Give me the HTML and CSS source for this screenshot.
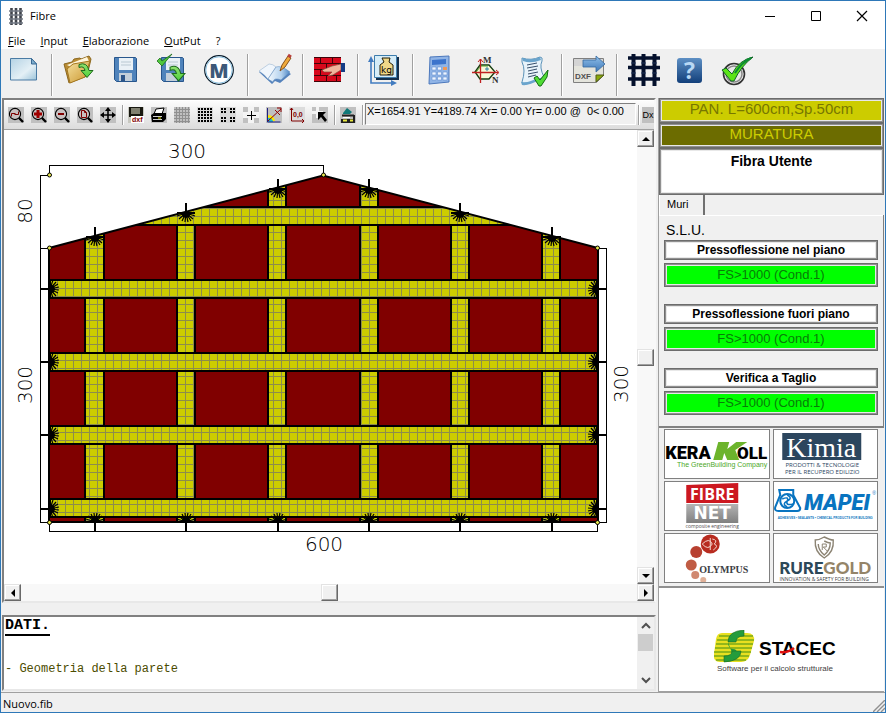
FILE: index.html
```html
<!DOCTYPE html>
<html lang="it">
<head>
<meta charset="utf-8">
<title>Fibre</title>
<link rel="stylesheet" href="styles.css">
</head>
<body>
<svg class="defs" aria-hidden="true">
  <defs>
    <linearGradient id="paper" x1="0" y1="0" x2="1" y2="1"><stop offset="0" stop-color="#b4d2e4"/><stop offset=".6" stop-color="#e4f0f6"/><stop offset="1" stop-color="#9cc4da"/></linearGradient>
    <linearGradient id="gold" x1="0" y1="0" x2="1" y2="1"><stop offset="0" stop-color="#f6e2a0"/><stop offset="1" stop-color="#c9942c"/></linearGradient>
    <linearGradient id="green" x1="0" y1="0" x2="0" y2="1"><stop offset="0" stop-color="#8fe070"/><stop offset="1" stop-color="#4fd23c"/></linearGradient>
    <linearGradient id="blue" x1="0" y1="0" x2="0" y2="1"><stop offset="0" stop-color="#8fc0ea"/><stop offset="1" stop-color="#3f78b8"/></linearGradient>
    <linearGradient id="navy" x1="0" y1="0" x2="0" y2="1"><stop offset="0" stop-color="#5d8fc4"/><stop offset="1" stop-color="#123f7a"/></linearGradient>
    <linearGradient id="steel" x1="0" y1="0" x2="1" y2="0"><stop offset="0" stop-color="#f4f9fd"/><stop offset=".6" stop-color="#b4d2ee"/><stop offset="1" stop-color="#4d86c4"/></linearGradient>
    <linearGradient id="silver" x1="0" y1="0" x2="0" y2="1"><stop offset="0" stop-color="#b4b4b4"/><stop offset="1" stop-color="#808080"/></linearGradient>
    <symbol id="arrow-down" viewBox="0 0 16 16"><path d="M1 2q8-3 10 6h4l-6 7-6-7h4q-1-5-6-3z" fill="url(#green)" stroke="#1d6b1c"/></symbol>
    <symbol id="lens" viewBox="0 0 16 16"><path d="M0 0h16v16H0z" fill="#c0c0c0"/><path d="M10 10l5 5" stroke="#000" stroke-width="2.4"/><circle cx="7" cy="7" r="5.6" fill="#c8c0c0" stroke="#000" stroke-width="1.1"/></symbol>
    <pattern id="mesh" width="8" height="8" patternUnits="userSpaceOnUse"><path d="M0 0h8v8H0z" fill="#cccc00"/><path d="M1 0h1v8H1zM0 0h8v1H0z" fill="#8c8c4c"/></pattern>
    <g id="fan">
      <path d="M-9-1H9V1H-9z"/><path d="M-1-10H1V1H-1z"/><path d="M-5 0H5L3 4 0 5-3 4z"/>
      <path d="M0 0L-9 3M0 0L-7 6M0 0L-4 8M0 0L-1 9M0 0L2 9M0 0L5 8M0 0L7 6M0 0L9 3" stroke="#000" stroke-width="1.2"/>
    </g>
    <clipPath id="wall"><path d="M49 248L323 175.500 598 248V522H49z"/></clipPath>
  </defs>
</svg>

<header class="titlebar">
  <svg class="app-icon" viewBox="0 0 14 17"><path d="M2.500 0v17M7 0v17M11.500 0v17" stroke="#40444c" stroke-width="2.600"/><path d="M0 3h14M0 7h14M0 11h14M0 15h14" stroke="#737985" stroke-width="1.600"/></svg>
  <h1>Fibre</h1>
  <div class="window-buttons">
    <button aria-label="Riduci"><svg viewBox="0 0 12 12"><path d="M1 6.500h10" stroke="#000"/></svg></button>
    <button aria-label="Ingrandisci"><svg viewBox="0 0 12 12"><path d="M1.500 1.500h9v9h-9z" fill="none" stroke="#000"/></svg></button>
    <button aria-label="Chiudi"><svg viewBox="0 0 12 12"><path d="M1 1l10 10M11 1L1 11" stroke="#000" stroke-width="1.200"/></svg></button>
  </div>
</header>

<nav class="menu">
  <a href="#"><u>F</u>ile</a><a href="#"><u>I</u>nput</a><a href="#"><u>E</u>laborazione</a><a href="#"><u>O</u>utPut</a><a href="#">?</a>
</nav>

<div class="toolbar">
  <button aria-label="Nuovo"><svg viewBox="0 0 32 32"><path d="M2.500 4.500h21l5 5.500v16h-26z" fill="url(#paper)" stroke="#4a7ba4"/><path d="M23.500 4.500V10h5z" fill="#7fb0d0" stroke="#3a6a94"/></svg></button>
  <i></i>
  <button aria-label="Apri"><svg viewBox="0 0 32 32"><path d="M1 10l8-2 2-3 6-1 1 1 8-3 2 3-4 17-18 7z" fill="#b98c34" stroke="#8c6820"/><path d="M4 11l20-8 2 4-18 6z" fill="#fff6dc"/><path d="M7 29L4 15l6-5 17-3-5 16z" fill="url(#gold)" stroke="#a57820"/><use href="#arrow-down" x="15" y="8" width="16" height="17"/></svg></button>
  <button aria-label="Salva"><svg viewBox="0 0 32 32"><path d="M4.500 3.500h21l1 1v23h-20l-2-2z" fill="#4f83bb" stroke="#28568c"/><path d="M9 4h14v12H9z" fill="#eaf1f6"/><path d="M11 8h10M11 11h10" stroke="#b9c8d2"/><path d="M9 19h13v8H9z" fill="#c3cfda"/><path d="M11 21h4v6h-4z" fill="#2c5589"/></svg></button>
  <button aria-label="Salva con nome"><svg viewBox="0 0 32 32"><path d="M4.500 3.500h21l1 1v23h-20l-2-2z" fill="#4f83bb" stroke="#28568c"/><path d="M9 4h14v12H9z" fill="#eaf1f6"/><path d="M11 8h10M11 11h10" stroke="#b9c8d2"/><path d="M9 19h11v8H9z" fill="#c3cfda"/><path d="M0 7l5 5L15 0 5 7 3 4z" fill="#50c83c" stroke="#1d6b1c" stroke-width=".8"/><use href="#arrow-down" x="12" y="11" width="17" height="17"/></svg></button>
  <button aria-label="Materiali"><svg viewBox="0 0 32 32"><circle cx="15" cy="16" r="14.300" fill="#fff" stroke="#081c2c" stroke-width="1.200"/><circle cx="15" cy="16" r="13.200" fill="none" stroke="#8ec4e4"/><text x="15" y="23.500" class="ic-m">M</text></svg></button>
  <i></i>
  <button aria-label="Relazione"><svg viewBox="0 0 32 32"><path d="M0 18l10-7 5 3 6-1 11 7-11 9-5-2-3 3z" fill="#5482bc"/><path d="M0 17l10-7q4 0 7 3L9 25q-4-5-9-8z" fill="#f0f6fc" stroke="#8aaacb" stroke-width=".5"/><path d="M9 25l8-12q5-2 14 5l-9 8q-7-3-8 2z" fill="url(#steel)" stroke="#5d8abc" stroke-width=".5"/><path d="M21 17l2-6 6-9 3 2-6 9z" fill="#efaa3c" stroke="#86501a"/><path d="M29 1l3 2" stroke="#b8403c" stroke-width="3"/></svg></button>
  <i></i>
  <button aria-label="Muratura"><svg viewBox="0 0 32 32"><path d="M0 3h27v25H0z" fill="#d8081c"/><path d="M0 3.500h27M0 9.500h27M0 15.500h27M0 21.500h27M0 27.500h27M6.500 3v6M18.500 3v6M12.500 9v6M24.500 9v6M6.500 15v6M12.500 21v6M22.500 21v6" stroke="#3c0408" fill="none"/><path d="M8 16l10-4 9-2v6l-5 3-3 2-5 1 4-4-8 0z" fill="#f0b49c" stroke="#8c4c3c" stroke-width=".7"/><path d="M27 9h4v9h-4z" fill="#143c86"/></svg></button>
  <i></i>
  <button aria-label="Carichi"><svg viewBox="0 0 32 32"><path d="M7 3h23v23H7z" fill="#14304c"/><path d="M5.500 1.500h22v22h-22z" fill="#d6edf8" stroke="#3d7cac"/><path d="M13 4h8l-1 4 4 3v10H11V11l4-3z" fill="#f0d888" stroke="#241c04"/><text x="17.500" y="19" class="ic-kg">kg</text><path d="M2 4v25h24" fill="none" stroke="#427cc0" stroke-width="1.600"/><path d="M2 2L-1 8h6zM28 29l-6-3v6z" fill="#427cc0"/></svg></button>
  <i></i>
  <button aria-label="Calcolo"><svg viewBox="0 0 32 32"><path d="M6 3l19-1v26L5 30z" fill="#90b4e6" stroke="#4c78bc"/><path d="M8 6l14-1v5L8 11z" fill="#3c74cc"/><g fill="#eef5ff" stroke="#6690d0" stroke-width=".6"><path d="M8 13h4v3H8zM13.500 13h4v3h-4zM8 18h4v3H8zM13.500 18h4v3h-4zM19 18h4v3h-4zM8 23h4v3H8zM13.500 23h4v3h-4zM19 23h4v3h-4z"/></g><path d="M19 13h4v3h-4z" fill="#ef9858"/></svg></button>
  <button aria-label="Dominio M-N"><svg viewBox="0 0 32 32"><path d="M4 18l5-7h9l6 7-6 7H9z" fill="#fafad8" stroke="#143c10" stroke-width="1.300"/><path d="M5 18l5-6h7" stroke="#50a030" fill="none"/><path d="M1 18.500h26M9.500 5v24" stroke="#c02020" stroke-width="1.300"/><path d="M7 8l2.500-3L12 8M25 16l3 2.500-3 2.500" stroke="#c02020" fill="none"/><path d="M16 13v4M14 15h4" stroke="#3080a0"/><text x="12" y="9" class="ic-mn">M</text><text x="21" y="29" class="ic-mn">N</text></svg></button>
  <button aria-label="Verifiche"><svg viewBox="0 0 32 32"><path d="M4 4q9 3 18-1 3 0 2 4-3 6 2 16l-14 6q-8 2-8-1 4-12 0-20z" fill="#e8f3fa" stroke="#5b92b8"/><path d="M4 4q10 3 18-1l1 3q-10 4-18 1z" fill="#6aa4cc"/><path d="M3 28q9 1 16-4l2 2q-10 6-17 5z" fill="#6aa4cc"/><path d="M9 11l10-2M9 14l11-2M10 17l9-2M10 20l10-2M10 23l8-2" stroke="#38506c"/><path d="M16 24l3-2 3 4 8-10-1 7-6 9-2 0z" fill="#50dc34" stroke="#126c14"/></svg></button>
  <i></i>
  <button aria-label="Esporta DXF"><svg viewBox="0 0 32 32"><path d="M.500 4.500h30v17l-7 7h-23z" fill="#d4d4d4" stroke="#808080"/><path d="M1 12h29v9l-7 7H1z" fill="#e4e4dc"/><path d="M23 28v-7h8z" fill="#88a80c" stroke="#505c14"/><text x="2" y="25" class="ic-dxf">DXF</text><path d="M10 6h13V2l9 8-9 8v-5H10z" fill="url(#blue)" stroke="#34689e" stroke-width=".8"/></svg></button>
  <i></i>
  <button aria-label="Rete"><svg viewBox="0 0 32 32"><path d="M5.500 0v32M15.500 0v32M26.500 0v32" stroke="#04102c" stroke-width="4"/><path d="M0 4h32M0 13.500h32M0 25h32" stroke="#04102c" stroke-width="3.600"/><path d="M3 9h5M13 9h5M24 9h5M3 19h5M13 19h5M24 19h5" stroke="#203458"/></svg></button>
  <button aria-label="Aiuto"><svg viewBox="0 0 32 32"><rect x="2" y="4" width="25" height="25" rx="3" fill="url(#navy)"/><text x="14.500" y="25" class="ic-help">?</text></svg></button>
  <button aria-label="Conferma"><svg viewBox="0 0 32 32"><circle cx="12" cy="20" r="10.500" fill="#e8e8e8" stroke="#303030" stroke-width="1.600"/><circle cx="12" cy="20" r="8" fill="none" stroke="#888" stroke-width="1.500"/><path d="M0 16l4-2 6 6Q17 6 31 3 19 12 12 27H9z" fill="#5ce418" stroke="#106428"/><path d="M13 19Q20 8 29 4" stroke="#0c8c34" stroke-width="2" fill="none"/></svg></button>
</div>

<main class="main">
  <section class="work">
    <div class="view">
      <div class="subbar">
        <button aria-label="Zoom finestra"><svg viewBox="0 0 16 16"><use href="#lens"/><path d="M3.500 9.500v-3h4M10.500 4.500v3h-4" fill="none" stroke="#800000"/></svg></button>
        <button aria-label="Zoom avanti"><svg viewBox="0 0 16 16"><use href="#lens"/><path d="M7 3v8M3 7h8" stroke="#a00000" stroke-width="3"/></svg></button>
        <button aria-label="Zoom indietro"><svg viewBox="0 0 16 16"><use href="#lens"/><path d="M4 7h6" stroke="#800000" stroke-width="2"/></svg></button>
        <button aria-label="Zoom tutto"><svg viewBox="0 0 16 16"><use href="#lens"/><path d="M4.500 3.500h3l2 2v5h-5zM7.500 3.500v2h2" fill="none" stroke="#800000"/></svg></button>
        <button aria-label="Sposta"><svg viewBox="0 0 16 16"><path d="M0 0h16v16H0z" fill="#c0c0c0"/><path d="M8 2v12M2 8h12" stroke="#000" stroke-width="1.600"/><path d="M8 0l3 4H5zM8 16l3-4H5zM0 8l4-3v6zM16 8l-4-3v6z"/></svg></button>
        <i></i>
        <button aria-label="Salva DXF"><svg viewBox="0 0 16 16"><path d="M0 0h16v16H0z" fill="#c8c8c0"/><path d="M1 0h14v10H1z" fill="#181810"/><path d="M3 1h9v6H3z" fill="#808070"/><path d="M3 9h13v7H3z" fill="#fff"/><text x="4" y="15" class="ic-tiny">dxf</text></svg></button>
        <button aria-label="Stampa"><svg viewBox="0 0 16 16"><path d="M0 0h16v16H0z" fill="#c0c0c0"/><path d="M5 2l8-1-2 6H3z" fill="#fff" stroke="#000"/><path d="M0 8l3-2h12v6l-3 3H1z"/><path d="M2 9.500h9M2 12.500h9" stroke="#d0d0d0"/><path d="M7 11h3" stroke="#e0e000"/></svg></button>
        <button aria-label="Griglia fine"><svg viewBox="0 0 16 16"><path d="M0 0h16v16H0z" fill="#c0c0c0"/><path d="M2.500 0v16M5.500 0v16M8.500 0v16M11.500 0v16M14.500 0v16M0 2.500h16M0 5.500h16M0 8.500h16M0 11.500h16M0 14.500h16" stroke="#909090"/></svg></button>
        <button aria-label="Griglia"><svg viewBox="0 0 16 16"><path d="M0 0h16v16H0z" fill="#d8d8d8"/><path d="M1 2h15M1 5h15M1 8h15M1 11h15M1 14h15" stroke="#000" stroke-width="2" stroke-dasharray="2 1"/></svg></button>
        <button aria-label="Aggancio griglia"><svg viewBox="0 0 16 16"><path d="M0 0h16v16H0z" fill="#d8d8d8"/><path d="M1 2h5M1 5h5M10 2h5M10 5h5M1 11h5M1 14h5M10 11h5M10 14h5" stroke="#000" stroke-width="2" stroke-dasharray="2 1"/></svg></button>
        <button aria-label="Aggancio punto"><svg viewBox="0 0 16 16"><path d="M0 0h16v16H0z" fill="#c0c0c0"/><path d="M5 0h6v5h5v6h-5v5H5v-5H0V5h5z" fill="#f4f4f4"/><path d="M8.500 4v9M4 8.500h9" stroke="#000"/></svg></button>
        <button aria-label="Angolo"><svg viewBox="0 0 16 16"><path d="M0 0h16v16H0z" fill="#c0c0c0"/><path d="M2 8q6 0 7 6H2z" fill="#ffe800"/><path d="M2 11a4 4 0 0 1 5 4H2z" fill="#20b8d0"/><path d="M1.500 1v14h13" stroke="#202080" fill="none"/><path d="M2 14L15 2M11 1h4v4M9 3l5 5" stroke="#900000" fill="none"/></svg></button>
        <button aria-label="Origine"><svg viewBox="0 0 16 16"><path d="M0 0h16v16H0z" fill="#dcdcdc"/><path d="M2.500 1v13H15M1 3l1.500-2L4 3M13 12l2 2-2 2" stroke="#800000" fill="none"/><text x="4" y="10" class="ic-tiny">0,0</text></svg></button>
        <button aria-label="Seleziona"><svg viewBox="0 0 16 16"><path d="M0 0h16v16H0z" fill="#c0c0c0"/><path d="M4 0h3v4h4v3H7v4H4V7H0V4h4z" fill="#f4f4f4"/><path d="M6 5h8l-3 3 4 5-2 2-4-5-3 3z"/></svg></button>
        <i></i>
        <button aria-label="Rendering"><svg viewBox="0 0 16 16"><path d="M0 0h16v16H0z" fill="#c0c0c0"/><path d="M3 6l4-5 5 4-2 2H3z" fill="#107878"/><path d="M2 7.500h12v2H2zM1 12h14v4H1zM13 8h2v6h-2z" fill="#202020"/><path d="M3 10.500h7" stroke="#fff"/><path d="M3 13.500h4M10 13.500h3" stroke="#e8e840" stroke-width="2"/></svg></button>
        <i></i>
        <input class="readout" type="text" readonly aria-label="Coordinate" value="X=1654.91 Y=4189.74 Xr= 0.00 Yr= 0.00 @  0&lt; 0.00">
        <i></i>
        <button class="dx">Dx</button>
      </div>
      <div class="stage">
        <div class="canvas">
          <svg class="drawing" width="633" height="454" viewBox="4 130 633 454">
            <g clip-path="url(#wall)">
              <path d="M49 170h549v352H49z" fill="#800000"/>
              <g fill="url(#mesh)" stroke="#000" stroke-width="2">
                <path d="M85 170h19v360H85zM177 170h18v360h-18zM268 170h18v360h-18zM360 170h18v360h-18zM451 170h18v360h-18zM542 170h18v360h-18z"/>
                <path d="M40 207h570v18H40zM40 280h570v18H40zM40 353h570v18H40zM40 426h570v18H40zM40 499h570v18H40z"/>
              </g>
            </g>
            <path d="M49 248L323 175.500 598 248V522H49z" fill="none" stroke="#000" stroke-width="2"/>
            <g stroke="#000" fill="none" shape-rendering="crispEdges">
              <path d="M49.500 175V165.500H323.500V175M49 175.500H40.500V522.500H49M41 248.500h8M598 248.500h8.500V522.500H598M49.500 522v9.500H597.500V522"/>
            </g>
            <use href="#fan" x="95" y="237"/><use href="#fan" x="186" y="213"/><use href="#fan" x="278" y="189"/><use href="#fan" x="369" y="189"/><use href="#fan" x="460" y="213"/><use href="#fan" x="552" y="237"/>
            <g transform="translate(0 522) scale(1 -1)"><use href="#fan" x="95"/><use href="#fan" x="186"/><use href="#fan" x="278"/><use href="#fan" x="369"/><use href="#fan" x="460"/><use href="#fan" x="552"/></g>
            <g transform="translate(50 0) rotate(-90)"><use href="#fan" x="-289"/><use href="#fan" x="-362"/><use href="#fan" x="-435"/><use href="#fan" x="-509"/></g>
            <g transform="translate(597 0) rotate(90)"><use href="#fan" x="289"/><use href="#fan" x="362"/><use href="#fan" x="435"/><use href="#fan" x="509"/></g>
            <g fill="#e8e850" stroke="#000"><circle cx="49.500" cy="175" r="2"/><circle cx="323.500" cy="175" r="2"/><circle cx="49.500" cy="248" r="2"/><circle cx="597.500" cy="248" r="2"/><circle cx="49.500" cy="522.500" r="2"/><circle cx="597.500" cy="522.500" r="2"/></g>
            <g class="dims">
              <text x="187" y="158">300</text><text x="324" y="551">600</text>
              <text transform="translate(32 211) rotate(-90)">80</text>
              <text transform="translate(32 385) rotate(-90)">300</text>
              <text transform="translate(628 384) rotate(-90)">300</text>
            </g>
          </svg>
        </div>
        <div class="scroll vertical">
          <button aria-label="Su"><svg viewBox="0 0 8 8"><path d="M0 6l4-4 4 4z"/></svg></button>
          <span class="track"></span><span class="thumb"></span><span class="track"></span>
          <button aria-label="Giù"><svg viewBox="0 0 8 8"><path d="M0 2l4 4 4-4z"/></svg></button>
        </div>
      </div>
      <div class="scroll horizontal">
        <button aria-label="Sinistra"><svg viewBox="0 0 8 8"><path d="M6 0L2 4l4 4z"/></svg></button>
        <span class="track"></span><span class="thumb"></span><span class="track"></span>
        <button aria-label="Destra"><svg viewBox="0 0 8 8"><path d="M2 0l4 4-4 4z"/></svg></button>
      </div>
    </div>
    <div class="report">
      <div class="report-text">
        <h2>DATI.</h2>
        <p>- Geometria della parete</p>
      </div>
      <div class="flat-scroll">
        <svg viewBox="0 0 10 8"><path d="M1 6l4-4 4 4" fill="none" stroke="#505050" stroke-width="2"/></svg>
        <span class="flat-thumb"></span>
        <svg viewBox="0 0 10 8"><path d="M1 2l4 4 4-4" fill="none" stroke="#505050" stroke-width="2"/></svg>
      </div>
    </div>
  </section>

  <aside class="side">
    <button class="field panel-name">PAN. L=600cm,Sp.50cm</button>
    <button class="field material">MURATURA</button>
    <div class="field fiber">Fibra Utente</div>
    <div class="tabs"><button class="tab">Muri</button></div>
    <div class="page">
      <h3>S.L.U.</h3>
      <div class="check"><button class="field name">Pressoflessione nel piano</button><div class="field ok">FS&gt;1000 (Cond.1)</div></div>
      <div class="check"><button class="field name">Pressoflessione fuori piano</button><div class="field ok">FS&gt;1000 (Cond.1)</div></div>
      <div class="check"><button class="field name">Verifica a Taglio</button><div class="field ok">FS&gt;1000 (Cond.1)</div></div>
    </div>
    <div class="brands">
      <a href="#"><svg viewBox="0 0 103 48"><text x="0" y="29" class="kera">KERA</text><text x="102" y="29" class="kera end">OLL</text><path d="M53 12h11l-2 7 9-7h11L70 20l4 10H62l-3-7-2 7H48z" fill="#6cb42c"/><text x="102" y="37" class="kera-sub">The GreenBuilding Company</text></svg></a>
      <a href="#"><svg viewBox="0 0 103 48"><path d="M8 3h79v27H8z" fill="#2c465e"/><text x="47" y="27" class="kimia">Kimia</text><text x="48" y="37" class="kimia-sub">PRODOTTI &amp; TECNOLOGIE</text><text x="48" y="44" class="kimia-sub">PER IL RECUPERO EDILIZIO</text></svg></a>
      <a href="#"><svg viewBox="0 0 103 48"><path d="M21 3l52-2v20H21z" fill="#cc1820"/><path d="M21 22h52v19H21z" fill="url(#silver)"/><text x="47" y="18" class="fibre">FIBRE</text><text x="47" y="37" class="net">NET</text><text x="47" y="46" class="fibre-sub">composite engineering</text></svg></a>
      <a href="#"><svg viewBox="0 0 103 48"><path d="M5 8h14v5l7 13q0 3-3 3H4q-4 0-3-4l5-12z" fill="#fff" stroke="#0874c0" stroke-width="2"/><circle cx="13" cy="19" r="7" fill="none" stroke="#0874c0" stroke-width="2"/><path d="M13 13q6 3 0 6t0 6M8 17q7-3 5 2t6 3" stroke="#0874c0" stroke-width="1.500" fill="none"/><text x="30" y="28" class="mapei">MAPEI</text><text x="98" y="13" class="reg">®</text><text x="51" y="37" class="mapei-sub">ADHESIVES • SEALANTS • CHEMICAL PRODUCTS FOR BUILDING</text></svg></a>
      <a href="#"><svg viewBox="0 0 103 48"><circle cx="45" cy="10" r="9.500" fill="#b82c20"/><path d="M37 10q7-7 10 0-4 7-10 0M45 4v12M47 5q6 1 2 5 5 2-1 6" fill="none" stroke="#f4d8d0"/><circle cx="31" cy="18" r="6" fill="#b84030"/><circle cx="26" cy="31" r="5.500" fill="#c05c44"/><circle cx="30" cy="41" r="4" fill="#d08870"/><circle cx="38" cy="46" r="3" fill="#e0b098"/><text x="34" y="39" class="olympus">OLYMPUS</text></svg></a>
      <a href="#"><svg viewBox="0 0 103 48"><path d="M50 3q6 3 9 3 1 12-9 18-10-6-9-18 4 0 9-3zM50 7q4 2 6 2 0 7-6 12-6-5-6-11" fill="none" stroke="#8c8474" stroke-width="1.400"/><path d="M48 16v-6h4v3h-3l4 4" fill="none" stroke="#8c8474"/><text x="51" y="40" class="rure">RURE<tspan class="gold">GOLD</tspan></text><text x="50" y="47" class="rure-sub">INNOVATION &amp; SAFETY FOR BUILDING</text></svg></a>
    </div>
    <div class="vendor">
      <svg width="126" height="44" viewBox="0 0 126 44">
        <path d="M9 3h25q8 0 7 8l-4 14q-2 7-9 7H7q-7 0-6-8L3 9q1-6 6-6z" fill="#e8e020"/>
        <path d="M6 6h34M4 10h37M3 14h37M2 18h37M1 22h37M1 26h35M3 30h30" stroke="#78a818" stroke-width="1.400"/>
        <path d="M31 0v6q-8 0-8 6h-8Q15 1 31 0z" fill="#249c3c" stroke="#1c6c24" stroke-width=".6"/>
        <path d="M15 12q0 7 5 7 4 0 4 4 0 9-13 9v-6q8 0 8-3" fill="#249c3c"/>
        <path d="M11 32v-6q8 0 8-5h9q0 10-17 11z" fill="#249c3c" stroke="#1c6c24" stroke-width=".6"/>
        <text x="46" y="25" class="stacec">STACEC</text><path d="M67 22q8 1 14-4" stroke="#e01010" stroke-width="2.500" fill="none"/>
        <text x="62" y="41" class="stacec-sub">Software per il calcolo strutturale</text>
      </svg>
    </div>
  </aside>
</main>

<footer class="status"><span>Nuovo.fib</span>
  <svg viewBox="0 0 12 12"><path d="M0 12L12 0M4 12l8-8M8 12l4-4" stroke="#909090" stroke-width="1.400"/></svg>
</footer>
</body>
</html>
```
FILE: styles.css
```css
* { box-sizing: border-box; }

body {
  margin: 0;
  min-height: 100vh;
  display: flex;
  flex-direction: column;
  border: 1px solid #2e78b8;
  background: #f0f0f0;
  color: #000;
  font: 11px/16px "Open Sans", "Liberation Sans", sans-serif;
}

button {
  padding: 0;
  border: 0;
  background: none;
  color: inherit;
  font: inherit;
}

a { color: inherit; text-decoration: none; }
h1, h2, h3, p { margin: 0; font: inherit; }
svg { display: block; }
.defs { position: absolute; width: 0; height: 0; }

/* Title and menu */
.titlebar {
  display: flex;
  align-items: center;
  height: 30px;
  padding-left: 8px;
  background: #fff;
}
.app-icon { width: 14px; height: 17px; margin-right: 7px; }
.window-buttons { display: flex; margin-left: auto; }
.window-buttons button { display: grid; place-items: center; width: 46px; height: 30px; }
.window-buttons svg { width: 12px; height: 12px; }

.menu { display: flex; gap: 15px; height: 18px; padding: 2px 7px 0; background: #fff; }

/* Main toolbar */
.toolbar { display: flex; height: 48px; padding-top: 5px; }
.toolbar button { width: 47px; height: 32px; padding-left: 7px; }
.toolbar svg { width: 32px; height: 32px; overflow: visible; }
.toolbar i {
  width: 2px;
  height: 42px;
  margin: 0 3px;
  border-left: 1px solid #a0a0a0;
  border-right: 1px solid #fff;
}
.ic-m { font: 900 20px "Open Sans", sans-serif; fill: #3c5878; text-anchor: middle; }
.ic-kg { font: 9px "DejaVu Sans", sans-serif; text-anchor: middle; }
.ic-mn { font: bold 9px "Liberation Serif", serif; fill: #303030; }
.ic-dxf { font: bold 8px "Liberation Sans", sans-serif; fill: #505050; }
.ic-help { font: bold 23px "Open Sans", sans-serif; fill: #b8d8f4; text-anchor: middle; }
.ic-tiny { font: bold 7px "Liberation Sans", sans-serif; fill: #800000; }

/* Two-column body */
.main { flex: 1; display: flex; padding-top: 1px; }
.work { flex: 1; min-width: 0; display: flex; flex-direction: column; gap: 12px; padding: 0 2px 1px 1px; }
.view {
  flex: 1;
  display: flex;
  flex-direction: column;
  border: 2px solid;
  border-color: #808080 #f8f8f8 #e8e8e8 #808080;
}

.subbar {
  display: flex;
  height: 30px;
  padding: 6px 0 0 1px;
  overflow: hidden;
  border-top: 1px solid #fff;
  border-bottom: 1px solid #a0a0a0;
  background: linear-gradient(#fcfcfc, #dcdcdc);
}
.subbar button { flex: none; width: 23px; height: 16px; padding-left: 3px; }
.subbar svg { width: 16px; height: 16px; }
.subbar i {
  flex: none;
  width: 2px;
  height: 20px;
  margin: -2px 1px 0 2px;
  border-left: 1px solid #a0a0a0;
  border-right: 1px solid #fff;
}
.subbar .readout {
  flex: 1;
  min-width: 0;
  height: 22px;
  margin: -4px 0 0;
  padding: 0 0 6px 1px;
  border: 1px solid;
  border-color: #808080 #fff #fff #808080;
  background: #f0f0f0;
  color: #000;
  font: 11px/14px "Liberation Sans", sans-serif;
  white-space: pre;
}
.subbar .dx {
  width: 12px;
  margin-left: 1px;
  padding: 0;
  overflow: hidden;
  background: #c0c0c0;
  font: 9px/16px "Liberation Sans", sans-serif;
}

.stage { flex: 1; display: flex; min-height: 0; }
.canvas { flex: 1; min-width: 0; overflow: hidden; background: #fff; }
.dims text { font: 200 20px "DejaVu Sans", "DejaVu Sans Light", sans-serif; text-anchor: middle; }

.scroll { display: flex; background: #f8f8f8; }
.vertical { flex-direction: column; width: 17px; }
.horizontal { height: 17px; }
.scroll button, .thumb {
  flex: none;
  display: grid;
  place-items: center;
  width: 17px;
  height: 17px;
  border: 1px solid;
  border-color: #e3e3e3 #696969 #696969 #e3e3e3;
  background: #f0f0f0;
  box-shadow: inset -1px -1px #a0a0a0, inset 1px 1px #fff;
}
.scroll svg { width: 8px; height: 8px; }
.track { flex: 1; }

.report {
  display: flex;
  height: 76px;
  border: 2px solid;
  border-color: #808080 #e8e8e8 #e8e8e8 #808080;
  background: #fff;
}
.report-text { flex: 1; padding: 1px; font: 12px/16px "Liberation Mono", monospace; color: #4c4c00; }
.report-text h2 {
  width: max-content;
  margin-bottom: 25px;
  border-bottom: 2px solid #000;
  color: #000;
  font: bold 15px/16px "Liberation Mono", monospace;
}
.flat-scroll { display: flex; flex-direction: column; align-items: center; width: 17px; padding: 5px 1px; background: #f0f0f0; }
.flat-scroll svg { width: 10px; height: 8px; }
.flat-scroll svg:last-child { margin-top: auto; }
.flat-thumb { width: 15px; height: 17px; margin-top: 4px; background: #cdcdcd; }

/* Results column */
.side {
  width: 227px;
  display: flex;
  flex-direction: column;
  padding-right: 1px;
  border-left: 1px solid #a0a0a0;
  font-family: "Liberation Sans", sans-serif;
}
.field {
  display: block;
  width: 100%;
  border: 1px solid #6c6c6c;
  box-shadow: inset 0 0 0 1px #909090, inset 0 0 0 2px #e8e8e8;
  text-align: center;
}
.panel-name, .material { height: 25px; padding-bottom: 3px; font-size: 15px; }
.panel-name { background: #cccc00; color: #777700; }
.material { background: #6c6c00; color: #cccc00; }
.fiber { height: 47px; background: #fff; font: bold 14px/24px "Liberation Sans", sans-serif; }

.tabs { height: 20px; }
.tab {
  width: 46px;
  height: 20px;
  padding: 0 0 2px 7px;
  border-right: 2px solid #707070;
  border-left: 1px solid #fff;
  font-size: 11px;
  text-align: left;
}
.page {
  height: 213px;
  padding: 5px 5px 0;
  border: solid #808080;
  border-width: 0 1px 2px 0;
  box-shadow: inset 0 1px #fff;
}
.page h3 { padding-left: 2px; font-size: 14px; line-height: 20px; }
.check { margin-bottom: 17px; }
.check .name { height: 20px; background: #fff; font-weight: bold; font-size: 12px; line-height: 14px; }
.check .ok { height: 24px; margin-top: 3px; background: #00ff00; color: #087c08; font-size: 13px; line-height: 21px; }

.brands {
  display: grid;
  grid-template-columns: 1fr 1fr;
  gap: 2px 3px;
  padding: 1px 6px 3px 5px;
  border-bottom: 2px solid #909090;
}
.brands a { height: 50px; border: 1px solid #808080; background: #fff; overflow: hidden; }
.brands svg { width: 100%; height: 48px; }
.kera { font: 900 18px "Roboto", sans-serif; }
.kera.end { font-size: 17px; text-anchor: end; }
.kera-sub { font: 7px "Liberation Sans", sans-serif; fill: #4ca828; text-anchor: end; }
.kimia { font: 28px "Liberation Serif", serif; fill: #fff; text-anchor: middle; }
.kimia-sub { font: 6px "Open Sans", sans-serif; fill: #2c465e; text-anchor: middle; }
.fibre { font: bold 16px "Open Sans", sans-serif; fill: #fff; text-anchor: middle; }
.net { font: bold 17px "DejaVu Sans", sans-serif; fill: #fff; text-anchor: middle; }
.fibre-sub { font: 5px "Open Sans", sans-serif; fill: #505050; text-anchor: middle; }
.mapei { font: italic 900 22px "Roboto", sans-serif; fill: #0874c0; }
.reg { font: 5px "Liberation Sans", sans-serif; fill: #0874c0; }
.mapei-sub { font: bold 3px "Liberation Sans", sans-serif; fill: #0874c0; text-anchor: middle; }
.olympus { font: bold 10px "Liberation Serif", serif; fill: #3c4044; }
.rure { font: 900 17px "Lato", sans-serif; fill: #2c4858; text-anchor: middle; }
.gold { fill: #948468; }
.rure-sub { font: 5px "Open Sans", sans-serif; fill: #404040; text-anchor: middle; }

.vendor { flex: 1; padding: 42px 0 0 54px; border-bottom: 1px solid #a0a0a0; background: #fff; }
.stacec { font: bold 19px "Liberation Sans", sans-serif; }
.stacec-sub { font: 8px "Liberation Sans", sans-serif; fill: #404040; text-anchor: middle; }

.status {
  display: flex;
  align-items: center;
  justify-content: space-between;
  height: 20px;
  padding: 2px 0 0 2px;
  border-top: 1px solid #a0a0a0;
}
.status svg { width: 12px; height: 12px; align-self: flex-end; }
```
